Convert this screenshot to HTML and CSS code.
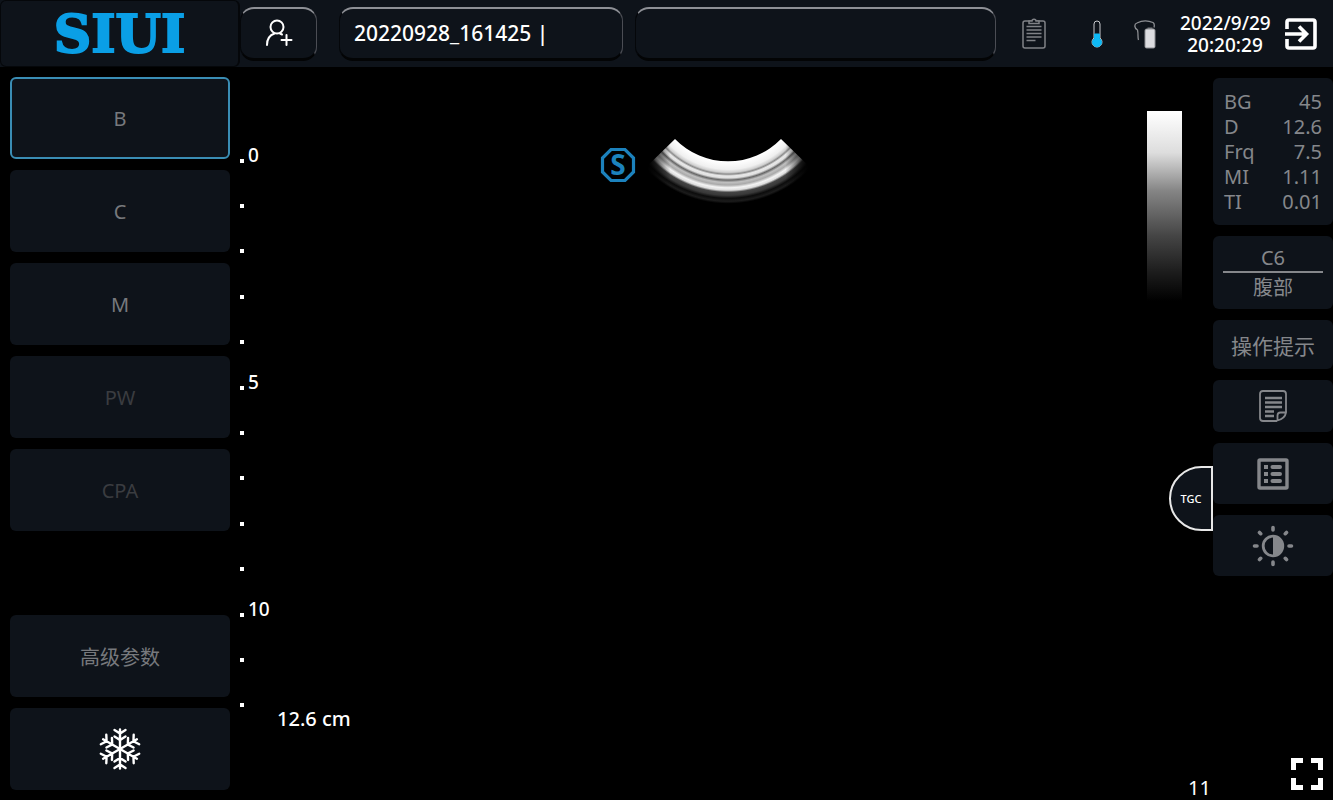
FILE: index.html
```html
<!DOCTYPE html>
<html lang="zh-CN">
<head>
    <meta charset="UTF-8">
    <meta name="viewport" content="width=device-width, initial-scale=1.0">
    <title>SIUI</title>
    <link rel="stylesheet" href="styles.css">
</head>
<body>
    <header class="topbar">
        <div class="logo">SIUI</div>

        <button class="box patient-btn" type="button" aria-label="新建病人">
            <svg width="28" height="28" viewBox="0 0 28 28" fill="none" stroke="#fff" stroke-width="2" stroke-linecap="round">
                <circle cx="12" cy="8" r="6.500"/>
                <path d="M2 26c0-6 3-10 7.500-11.500M15 14.500l2 1M21.500 16v10M16.500 21h10"/>
            </svg>
        </button>

        <input class="box patient-id" type="text" value="20220928_161425 |" aria-label="病人ID">
        <input class="box patient-name" type="text" value="" aria-label="姓名">

        <div class="status">
            <svg width="24" height="31" viewBox="0 0 24 31" fill="none" stroke="#808287" stroke-width="1.500">
                <rect x="1" y="3" width="22" height="27" rx="2"/>
                <path d="M7 5.500V3h3c0-2.500 4-2.500 4 0h3v2.500z" fill="#0e131a"/>
                <path d="M4.500 8.500h15M4.500 12h15M4.500 15.500h15M4.500 19h15M4.500 22.500h9"/>
            </svg>
            <svg class="temp" width="12" height="28" viewBox="0 0 12 28">
                <path d="M3 18V4a3 3 0 0 1 6 0v14a5 5 0 1 1-6 0z" fill="#0e131a" stroke="#c8cacd"/>
                <path d="M3.500 14h5v4.500a4.500 4.500 0 1 1-5 0z" fill="#0fb9f5" stroke="#0fb9f5"/>
            </svg>
            <svg width="22" height="30" viewBox="0 0 22 30">
                <path d="M4.500 21c-1-3 0-6-1-10C0 9 0 5 3 4c5-2.500 11-2.500 16-.5 1.500 1 1.500 3 1 5" fill="none" stroke="#8d8f93" stroke-width="1.300"/>
                <path d="M13.500 8.500h5V11h-5z" fill="#77797d"/>
                <rect x="11" y="10" width="10" height="19" rx="1.500" fill="#dcdce0" stroke="#8d8f93"/>
            </svg>
        </div>

        <time class="clock" datetime="2022-09-29T20:20:29">2022/9/29 20:20:29</time>

        <button class="icon-btn" type="button" aria-label="退出">
            <svg width="32" height="32" viewBox="0 0 32 32" fill="none" stroke="#fff" stroke-width="3.600">
                <path d="M2 11V4q0-2 2-2h24q2 0 2 2v24q0 2-2 2H4q-2 0-2-2v-7"/>
                <path d="M0 16h20M14 8.500l7.500 7.500-7.500 7.500"/>
            </svg>
        </button>
    </header>

    <main class="workspace">
        <nav class="modes">
            <button class="mode active" type="button">B</button>
            <button class="mode" type="button">C</button>
            <button class="mode" type="button">M</button>
            <button class="mode" type="button" disabled>PW</button>
            <button class="mode" type="button" disabled>CPA</button>
            <button class="mode advanced" type="button">高级参数</button>
            <button class="mode" type="button" aria-label="冻结">
                <svg width="42" height="42" viewBox="-21 -21 42 42" fill="none" stroke="#fff" stroke-width="2.400" stroke-linecap="round">
                    <defs>
                        <path id="arm" d="M0 0V-19.500M-5.500-19l5.500 3.500 5.500-3.500M-5.500-12.500l5.500 3.500 5.500-3.500"/>
                    </defs>
                    <use href="#arm"/>
                    <use href="#arm" transform="rotate(60)"/>
                    <use href="#arm" transform="rotate(120)"/>
                    <use href="#arm" transform="rotate(180)"/>
                    <use href="#arm" transform="rotate(240)"/>
                    <use href="#arm" transform="rotate(300)"/>
                </svg>
            </button>
        </nav>

        <ul class="ruler">
            <li><span>0</span></li>
            <li></li>
            <li></li>
            <li></li>
            <li></li>
            <li><span>5</span></li>
            <li></li>
            <li></li>
            <li></li>
            <li></li>
            <li><span>10</span></li>
            <li></li>
            <li></li>
        </ul>

        <section class="screen">
            <div class="scan">
                <svg class="badge" width="36" height="36" viewBox="0 0 36 36">
                    <path d="M11 2.500h14l8.500 8.500v14L25 33.500H11L2.500 25V11z" fill="none" stroke="#1c82bd" stroke-width="3.200"/>
                    <text class="mark" x="18" y="28" text-anchor="middle">S</text>
                </svg>
                <!-- convex probe echo, centre of curvature at 80,-48 -->
                <svg width="160" height="70" viewBox="0 0 160 70">
                    <defs>
                        <radialGradient id="echo" gradientUnits="userSpaceOnUse" cx="80" cy="-48" r="118">
                            <stop offset="0.627" stop-color="#fff"/>
                            <stop offset="0.690" stop-color="#f0f0f0"/>
                            <stop offset="0.715" stop-color="#d0d0d0"/>
                            <stop offset="0.730" stop-color="#8a8a8a"/>
                            <stop offset="0.745" stop-color="#e8e8e8"/>
                            <stop offset="0.762" stop-color="#e0e0e0"/>
                            <stop offset="0.780" stop-color="#666"/>
                            <stop offset="0.800" stop-color="#c0c0c0"/>
                            <stop offset="0.822" stop-color="#aaa"/>
                            <stop offset="0.845" stop-color="#f4f4f4"/>
                            <stop offset="0.866" stop-color="#ddd"/>
                            <stop offset="0.884" stop-color="#444"/>
                            <stop offset="0.910" stop-color="#383838"/>
                            <stop offset="0.935" stop-color="#0c0c0c"/>
                            <stop offset="0.960" stop-color="#1c1c1c"/>
                            <stop offset="0.980" stop-color="#000"/>
                        </radialGradient>
                        <linearGradient id="edges">
                            <stop offset="0" stop-color="#000"/>
                            <stop offset="0.140" stop-color="#000" stop-opacity="0"/>
                            <stop offset="0.860" stop-color="#000" stop-opacity="0"/>
                            <stop offset="1" stop-color="#000"/>
                        </linearGradient>
                    </defs>
                    <path d="M27 3A74 74 0 0 0 133 3L164 33A117 117 0 0 1-4 33z" fill="url(#echo)"/>
                    <path d="M0 0h160v70H0z" fill="url(#edges)"/>
                </svg>
            </div>
            <p class="depth">12.6 cm</p>
        </section>

        <div class="rail">
            <div class="grayscale"></div>
            <button class="tgc" type="button">TGC</button>
            <span class="frame">11</span>
        </div>

        <aside class="panel">
            <table class="card params">
                <tr><th scope="row">BG</th><td>45</td></tr>
                <tr><th scope="row">D</th><td>12.6</td></tr>
                <tr><th scope="row">Frq</th><td>7.5</td></tr>
                <tr><th scope="row">MI</th><td>1.11</td></tr>
                <tr><th scope="row">TI</th><td>0.01</td></tr>
            </table>

            <button class="card probe" type="button">
                <span>C6</span>
                <span class="part">腹部</span>
            </button>

            <button class="card hint" type="button">操作提示</button>

            <button class="card note" type="button" aria-label="注释">
                <svg width="28" height="32" viewBox="0 0 28 32" fill="none" stroke="#85878b" stroke-width="1.800">
                    <path d="M18 31H4q-3 0-3-3V4q0-3 3-3h20q3 0 3 3v18"/>
                    <path d="M18.500 30.500v-5q0-3 3-3h5.500q-1 6-8.500 8z"/>
                    <path d="M6 8h17M6 12.500h17M6 17h17M6 21.500h9M6 26h9" stroke-width="2.400"/>
                </svg>
            </button>

            <button class="card tool" type="button" aria-label="列表">
                <svg width="32" height="32" viewBox="0 0 32 32" fill="none" stroke="#85878b">
                    <rect x="2" y="2" width="28" height="28" rx="1" stroke-width="3.400"/>
                    <path d="M7 9h4M7 16h4M7 23h4" stroke-width="4"/>
                    <path d="M15.500 9h7.500M15.500 16h7.500M15.500 23h7.500" stroke-width="4" stroke-linecap="round"/>
                </svg>
            </button>

            <button class="card tool" type="button" aria-label="亮度">
                <svg width="42" height="42" viewBox="-21 -21 42 42" fill="none" stroke="#85878b" stroke-width="3.600" stroke-linecap="round">
                    <circle r="9.800" stroke-width="2.800"/>
                    <path d="M0-9.500a9.500 9.500 0 0 1 0 19z" fill="#85878b" stroke="none"/>
                    <path d="M0-18.500v2.500M0 18.500v-2.500M-18.500 0h2.500M18.500 0h-2.500M-13.500-13.500l1.200 1.200M13.500-13.500l-1.200 1.200M-13.500 13.500l1.200-1.200M13.500 13.500l-1.200-1.200"/>
                </svg>
            </button>

            <button class="icon-btn fullscreen" type="button" aria-label="全屏">
                <svg width="32" height="32" viewBox="0 0 32 32" fill="none" stroke="#fff" stroke-width="5">
                    <path d="M2.500 12V2.500H12M20 2.500h9.500V12M29.500 20v9.500H20M12 29.500H2.500V20"/>
                </svg>
            </button>
        </aside>
    </main>
</body>
</html>
```
FILE: styles.css
```css
* {
    box-sizing: border-box;
}

body {
    font-family: 'Noto Sans', 'Noto Sans CJK SC', sans-serif;
    font-size: 20px;
    background-color: #000;
    color: #fff;
    margin: 0;
    min-height: 100vh;
    display: flex;
    flex-direction: column;
}

button,
input {
    font: inherit;
    color: inherit;
    margin: 0;
    padding: 0;
    border: none;
    background: none;
}

button {
    display: flex;
    align-items: center;
    justify-content: center;
    cursor: pointer;
}

svg {
    display: block;
    flex: none;
}

/* Top bar */
.topbar {
    display: flex;
    align-items: center;
    height: 67px;
    padding-right: 16px;
    background-color: #0e131a;
}

.logo {
    width: 240px;
    height: 67px;
    border: 1px solid #05070a;
    border-right-width: 2px;
    border-radius: 6px;
    color: #0a9fe6;
    font-family: 'DejaVu Serif', serif;
    font-size: 52px;
    font-weight: bold;
    line-height: 66px;
    text-align: center;
    -webkit-text-stroke: 2px #0a9fe6;
}

.box {
    height: 54px;
    border-top: 2px solid #8e9096;
    border-right: 1px solid #4b4d54;
    border-bottom: 3px solid #030405;
    border-left: 1px solid #05070a;
    border-radius: 14px;
    background-color: #0e131a;
}

.patient-btn {
    width: 77px;
    margin-right: 22px;
}

.patient-id,
.patient-name {
    min-width: 0;
    padding: 0 14px;
    font-size: 21px;
    font-weight: 500;
}

.patient-id {
    flex: 280 1 0;
    margin-right: 12px;
}

.patient-name {
    flex: 364 1 0;
}

.status {
    display: flex;
    align-items: center;
    justify-content: space-between;
    width: 134px;
    margin: 0 24px 0 26px;
}

.temp {
    margin-left: 14px;
}

.clock {
    width: 90px;
    margin-right: 15px;
    font-size: 19px;
    font-weight: 500;
    line-height: 22px;
    text-align: center;
}

/* Workspace */
.workspace {
    flex: 1;
    display: flex;
}

.modes {
    display: flex;
    flex-direction: column;
    gap: 11px;
    width: 240px;
    padding: 10px;
}

.mode {
    height: 82px;
    border-radius: 6px;
    background-color: #0e131a;
    color: #77797d;
}

.mode.active {
    border: 2px solid #3a8db4;
}

.mode:disabled {
    color: #3a3c40;
    cursor: default;
}

.advanced {
    margin-top: auto;
}

.ruler {
    display: flex;
    flex-direction: column;
    width: 37px;
    margin: 0;
    padding: 71px 0 72px;
    list-style: none;
}

.ruler li {
    flex: 1;
    display: flex;
    align-items: center;
    gap: 4px;
    font-size: 19px;
    font-weight: 500;
    line-height: 20px;
}

.ruler li::before {
    content: '';
    width: 4px;
    height: 4px;
    background-color: #fff;
}

.ruler span {
    padding-bottom: 12px;
}

.screen {
    flex: 1;
    display: flex;
    flex-direction: column;
    justify-content: space-between;
    padding: 69px 0;
}

.scan {
    display: flex;
    align-items: center;
    justify-content: center;
    gap: 12px;
}

.badge {
    margin-bottom: 12px;
}

.mark {
    font-family: 'Noto Sans', sans-serif;
    font-size: 28px;
    font-weight: bold;
    fill: #1c82bd;
}

.depth {
    margin: 0;
    font-weight: 500;
    line-height: 24px;
}

.rail {
    display: flex;
    flex-direction: column;
    align-items: flex-end;
    width: 66px;
    margin-left: 16px;
    padding-top: 44px;
}

.grayscale {
    align-self: flex-start;
    width: 35px;
    height: 190px;
    margin-bottom: 165px;
    background: linear-gradient(#fff 0%, #ddd 22%, #858585 42%, #444 66%, #1c1c1c 85%, #000 100%);
}

.tgc {
    width: 44px;
    height: 65px;
    border: 2px solid #e8e8e8;
    border-radius: 33px 0 0 33px;
    background-color: #0e131a;
    font-size: 11px;
    font-weight: 500;
}

.frame {
    margin-top: auto;
    padding-right: 2px;
    line-height: 24px;
}

/* Right panel */
.panel {
    display: flex;
    flex-direction: column;
    gap: 11px;
    width: 120px;
    padding: 11px 0 10px;
}

.card {
    width: 100%;
    border-radius: 6px;
    background-color: #0e131a;
    color: #85878b;
}

.params {
    padding: 11px;
    border-spacing: 0;
    line-height: 25px;
}

.params th,
.params td {
    padding: 0;
    font-weight: normal;
    text-align: left;
}

.params td {
    text-align: right;
}

.probe {
    flex-direction: column;
    align-items: stretch;
    height: 73px;
    padding: 0 10px;
    line-height: 26px;
}

.part {
    padding-top: 2px;
    border-top: 2px solid #85878b;
}

.hint {
    height: 49px;
    font-size: 21px;
}

.note {
    height: 52px;
}

.tool {
    height: 61px;
}

.fullscreen {
    align-self: flex-end;
    margin-top: auto;
    margin-right: 10px;
}
```
